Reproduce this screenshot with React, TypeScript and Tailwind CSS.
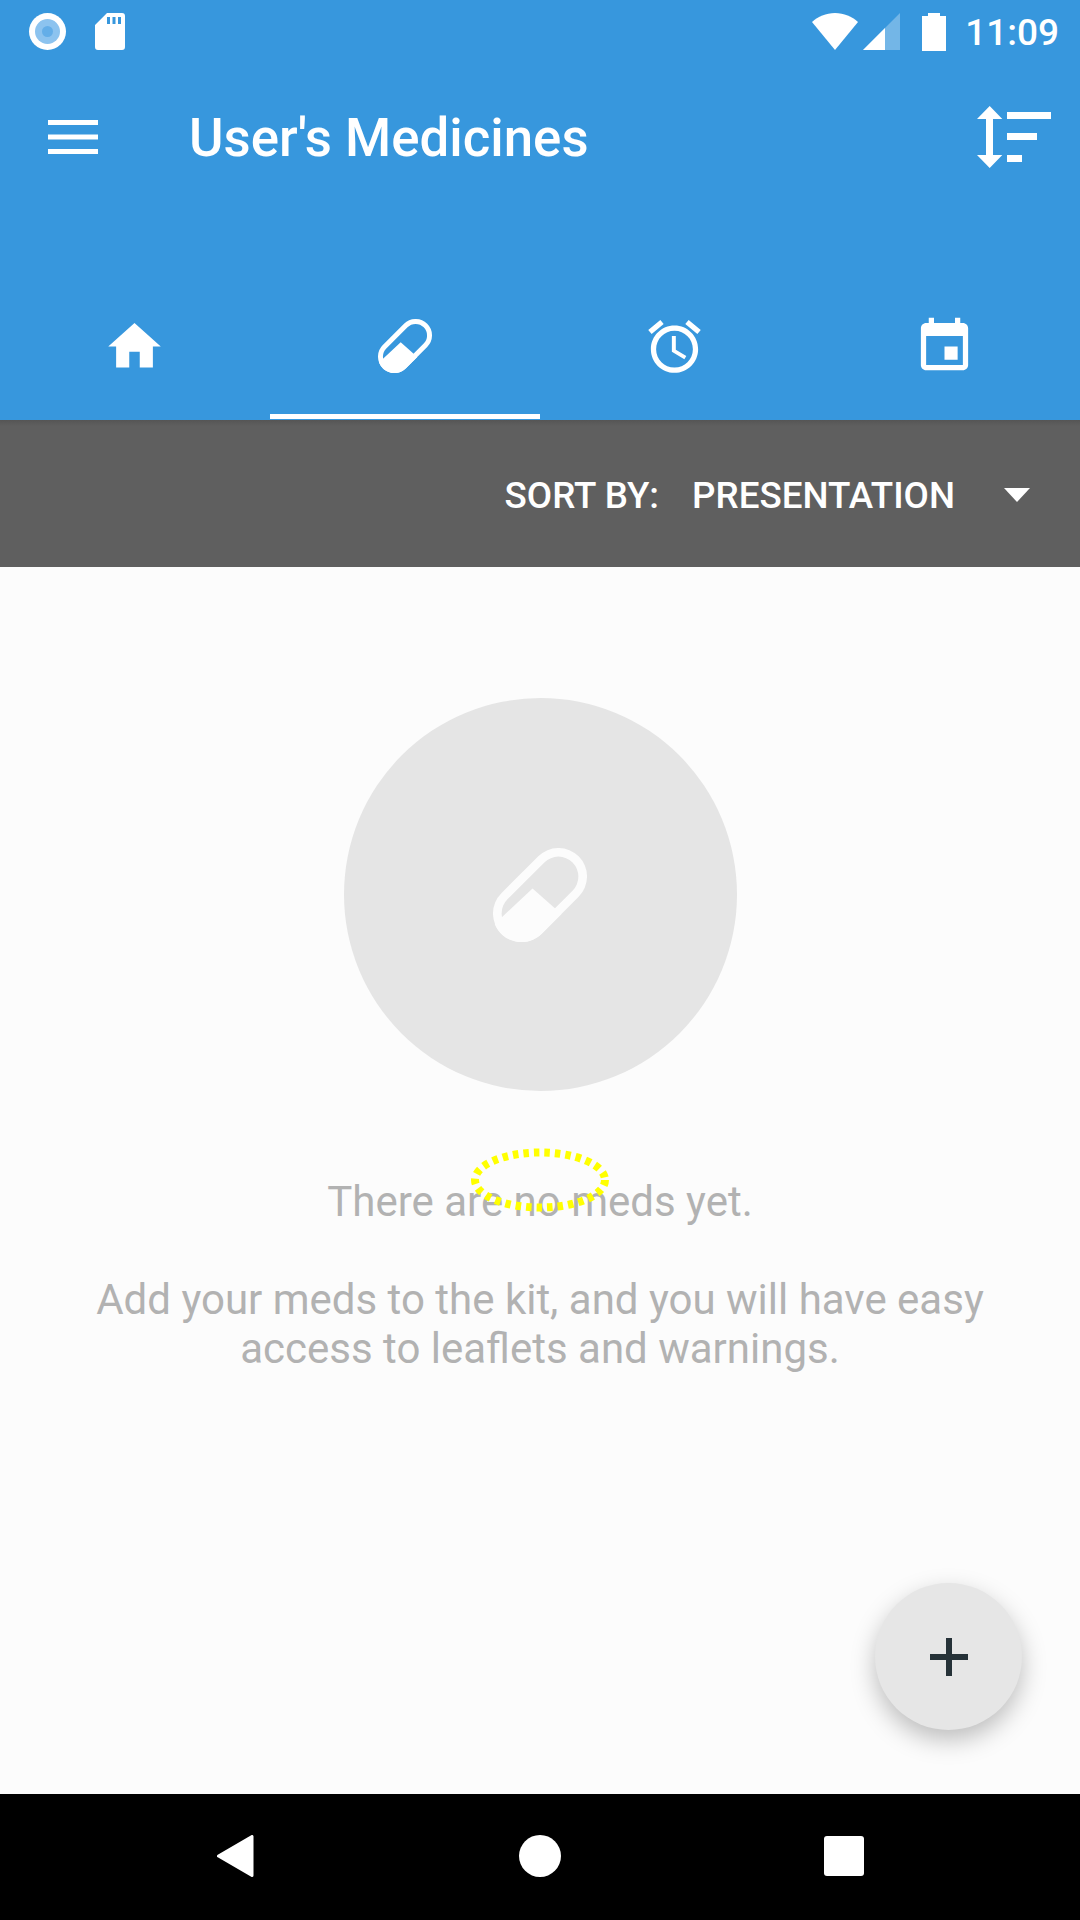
import React from 'react';

function Pill({ size, color }: { size: number; color: string }) {
  return (
    <svg width={size} height={size} viewBox="0 0 54 54" fill={color}>
      <path
        fillRule="evenodd"
        d="M4.8 26 26 4.8A16.4 16.4 0 0 1 49.2 28L28 49.2A16.4 16.4 0 0 1 4.8 26ZM8.3 29.5A11.4 11.4 0 0 0 24.5 45.7L45.7 24.5A11.4 11.4 0 0 0 29.5 8.3Z"
      />
      <path d="M1 43.6 22.7 23.2 39.3 37.9 28 49.2A16.4 16.4 0 0 1 1 43.6Z" />
    </svg>
  );
}

function MdIcon({ d }: { d: string }) {
  return (
    <svg width="63" height="63" viewBox="0 0 24 24" fill="white">
      <path d={d} />
    </svg>
  );
}

function StatusBar() {
  return (
    <div className="flex h-[63px] items-center pl-[29px] pr-[21px]">
      <div className="flex h-[37px] w-[37px] items-center justify-center rounded-full bg-white">
        <div className="flex h-[25px] w-[25px] items-center justify-center rounded-full bg-[#8cc3ef]">
          <div className="h-[11px] w-[11px] rounded-full bg-[#64aee8]" />
        </div>
      </div>
      <svg className="ml-[29px]" width="30" height="37" viewBox="0 0 30 37">
        <path
          fill="white"
          fillRule="evenodd"
          d="M12 0H27a3 3 0 0 1 3 3V34a3 3 0 0 1-3 3H3a3 3 0 0 1-3-3V12ZM12 4V11H15V4ZM17.5 4V11H20.5V4ZM23 4V11H26V4Z"
        />
      </svg>
      <div className="flex-1" />
      <svg width="46" height="37" viewBox="0 0 46 37">
        <path fill="white" d="M23 37 0 9C6 3.500 14 0 23 0S40 3.500 46 9Z" />
      </svg>
      <svg className="ml-[5px]" width="37" height="37" viewBox="0 0 37 37">
        <path fill="white" fillOpacity="0.3" d="M37 0V37H0Z" />
        <path fill="white" d="M22 15V37H0Z" />
      </svg>
      <svg className="ml-[22px]" width="24" height="38" viewBox="0 0 24 38">
        <path fill="white" d="M6 0H18V3H24V38H0V3H6Z" />
      </svg>
      <span className="ml-[19px] mt-[2px] text-[37px] font-medium leading-none text-white">11:09</span>
    </div>
  );
}

function Toolbar() {
  return (
    <div className="flex h-[147px] items-center pl-[48px] pr-[29px]">
      <svg width="50" height="34" viewBox="0 0 50 34" fill="white">
        <path d="M0 0H50V5H0ZM0 14.500H50V19.500H0ZM0 29H50V34H0Z" />
      </svg>
      <h1 className="ml-[91px] mt-[3px] flex-1 text-[52.800px] font-medium leading-none text-white">User's Medicines</h1>
      <svg width="74" height="62" viewBox="0 0 74 62" fill="white">
        <path d="M12.700 0 25.300 13H16V49H25.300L12.700 62 0 49H9V13H0Z" />
        <path d="M30 6H74V13H30ZM30 27H60V34H30ZM30 49H45V56H30Z" />
      </svg>
    </div>
  );
}

function Tabs() {
  const cell = 'flex h-[146px] w-[270px] items-center justify-center';
  return (
    <div className="mt-[63px] flex">
      <div className={`${cell} pr-[2px]`}>
        <MdIcon d="M10 20v-6h4v6h5v-8h3L12 3 2 12h3v8z" />
      </div>
      <div className={`${cell} border-b-[5px] border-white pt-[5px]`}>
        <Pill size={54} color="white" />
      </div>
      <div className={`${cell} pr-[2px]`}>
        <MdIcon d="M22 5.720l-4.600-3.860-1.290 1.530 4.600 3.860L22 5.720zM7.880 3.390L6.600 1.860 2 5.710l1.290 1.530 4.590-3.850zM12.500 8H11v6l4.750 2.850.75-1.230-4-2.370V8zM12 4c-4.970 0-9 4.030-9 9s4.030 9 9 9 9-4.030 9-9-4.030-9-9-9zm0 16c-3.870 0-7-3.130-7-7s3.130-7 7-7 7 3.130 7 7-3.130 7-7 7z" />
      </div>
      <div className={`${cell} pr-[2px]`}>
        <MdIcon d="M17 12h-5v5h5v-5zM16 1v2H8V1H6v2H5c-1.110 0-1.990.9-1.990 2L3 19c0 1.100.89 2 2 2h14c1.100 0 2-.9 2-2V5c0-1.100-.9-2-2-2h-1V1h-2zm3 18H5V8h14v11z" />
      </div>
    </div>
  );
}

function SortBar() {
  return (
    <div className="flex h-[147px] items-center justify-end bg-[#5f5f5f] bg-gradient-to-b from-[#555555] to-[#5f5f5f] to-[6px] pr-[50px] pt-[3px] text-[36.750px] font-medium leading-none text-white">
      <span className="mt-[2px]">SORT BY:</span>
      <span className="ml-[33px] mt-[2px]">PRESENTATION</span>
      <div className="ml-[49px] h-0 w-0 border-x-[13px] border-t-[14px] border-x-transparent border-t-white" />
    </div>
  );
}

function EmptyState() {
  return (
    <div className="relative flex flex-1 flex-col items-center bg-[#fcfcfc] pt-[131px]">
      <div className="flex h-[393px] w-[393px] items-center justify-center rounded-full bg-[#e5e5e5]">
        <Pill size={94} color="#fcfcfc" />
      </div>
      <p className="mt-[86px] text-[42px] leading-[49px] text-[#b2b2b2]">There are no meds yet.</p>
      <p className="mt-[49px] text-center text-[42px] leading-[49px] text-[#b2b2b2]">
        Add your meds to the kit, and you will have easy
        <br />
        access to leaflets and warnings.
      </p>
      {/* yellow dotted touch marker */}
      <svg className="absolute left-[470px] top-[580px]" width="140" height="66" viewBox="0 0 140 66">
        <ellipse cx="70" cy="33" rx="65" ry="27.500" fill="none" stroke="#ffff00" strokeWidth="8" strokeDasharray="5.500 5" />
      </svg>
      <button className="absolute bottom-[64px] right-[58px] flex h-[147px] w-[147px] items-center justify-center rounded-full bg-[#e6e6e6] shadow-[0_10px_24px_rgba(0,0,0,0.25)]">
        <svg width="38" height="38" viewBox="0 0 38 38">
          <path fill="#263238" d="M16 0H22V16H38V22H22V38H16V22H0V16H16Z" />
        </svg>
      </button>
    </div>
  );
}

function NavBar() {
  return (
    <div className="flex h-[126px] items-center justify-center gap-[263px] bg-black pb-[2px]">
      <svg width="42" height="42" viewBox="0 0 42 42">
        <path fill="white" stroke="white" strokeWidth="3" strokeLinejoin="round" d="M4.500 21 38 1.500V40.500Z" />
      </svg>
      <div className="h-[42px] w-[42px] rounded-full bg-white" />
      <div className="mr-[2px] h-[40px] w-[40px] rounded-[3px] bg-white" />
    </div>
  );
}

export default function App() {
  return (
    <div className="flex h-[1920px] w-[1080px] flex-col overflow-hidden font-['Roboto',sans-serif]">
      <div className="bg-[#3797dd] pb-px">
        <StatusBar />
        <Toolbar />
        <Tabs />
      </div>
      <SortBar />
      <EmptyState />
      <NavBar />
    </div>
  );
}
